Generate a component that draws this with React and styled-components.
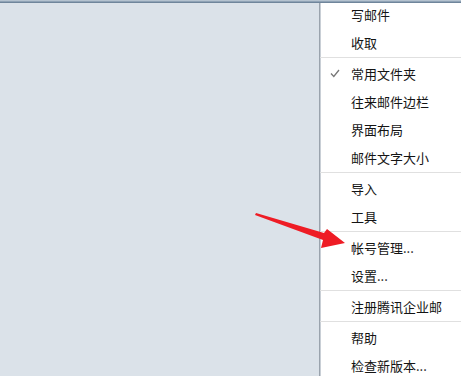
import React from 'react'
import styled, { createGlobalStyle } from 'styled-components'

const GlobalStyle = createGlobalStyle`
  html, body {
    margin: 0;
    padding: 0;
    width: 461px;
    height: 376px;
    overflow: hidden;
    background: #dbe2e9;
    font-family: "Noto Sans CJK SC", "Microsoft YaHei", sans-serif;
  }
`

const Page = styled.div`
  position: relative;
  width: 461px;
  height: 376px;
  display: flex;
  flex-direction: column;
  overflow: hidden;
`

const TopBar = styled.div`
  height: 3px;
  flex-shrink: 0;
  background: #8fa2b5;
  border-top: 1px solid #b4c2cf;
  box-sizing: border-box;
  border-bottom: 1px solid #6f859b;
`

const Body = styled.div`
  flex: 1;
  display: flex;
`

const Desktop = styled.div`
  width: 319px;
  background: #dbe2e9;
`

const Menu = styled.ul`
  list-style: none;
  margin: 0;
  padding: 0;
  flex: 1;
  background: #fff;
  border-left: 1px solid #9aa3ad;
  box-shadow: inset 1px 0 0 #c9cfd6;
  display: flex;
  flex-direction: column;
`

const Item = styled.li`
  position: relative;
  height: 28px;
  flex-shrink: 0;
  display: flex;
  align-items: center;
  padding-left: 31px;
  font-size: 13px;
  color: #141414;
  white-space: nowrap;
  margin-top: ${p => (p.$first ? '-3px' : '0')};
`

const Check = styled.svg`
  position: absolute;
  left: 10px;
  top: 10px;
`

const Separator = styled.li`
  height: 3px;
  flex-shrink: 0;
  display: flex;
  align-items: center;
  &::after {
    content: '';
    flex: 1;
    height: 1px;
    background: #e0e0e0;
  }
`

const Arrow = styled.svg`
  position: absolute;
  left: 250px;
  top: 205px;
`

const groups = [
  [{ t: '写邮件' }, { t: '收取' }],
  [{ t: '常用文件夹', checked: true }, { t: '往来邮件边栏' }, { t: '界面布局' }, { t: '邮件文字大小' }],
  [{ t: '导入' }, { t: '工具' }],
  [{ t: '帐号管理...' }, { t: '设置...' }],
  [{ t: '注册腾讯企业邮' }],
  [{ t: '帮助' }, { t: '检查新版本...' }],
]

const App = () => {
  return (
    <Page>
      <GlobalStyle />
      <TopBar />
      <Body>
        <Desktop />
        <Menu>
          {groups.map((g, gi) => (
            <React.Fragment key={gi}>
              {gi > 0 && <Separator />}
              {g.map((it, ii) => (
                <Item key={it.t} $first={gi === 0 && ii === 0}>
                  {it.checked && (
                    <Check width="10" height="9" viewBox="0 0 10 9">
                      <polyline points="1,4.5 3.8,7.5 9,1" fill="none" stroke="#777" strokeWidth="1.3" />
                    </Check>
                  )}
                  {it.t}
                </Item>
              ))}
            </React.Fragment>
          ))}
        </Menu>
      </Body>
      <Arrow width="100" height="50" viewBox="0 0 100 50">
        <polygon
          points="5,10 6,8 74,28 77,24 95,38 71,43 73,35"
          fill="#ee1c25"
        />
      </Arrow>
    </Page>
  )
}

export default App
